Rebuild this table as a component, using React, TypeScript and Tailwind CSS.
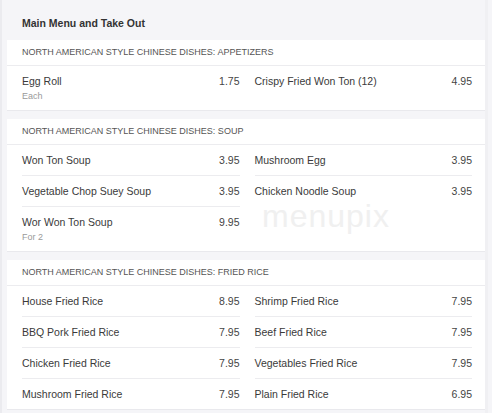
type Item = { name: string; price: string; note?: string };
type Section = { title: string; items: Item[] };

const sections: Section[] = [
  {
    title: "NORTH AMERICAN STYLE CHINESE DISHES: APPETIZERS",
    items: [
      { name: "Egg Roll", price: "1.75", note: "Each" },
      { name: "Crispy Fried Won Ton (12)", price: "4.95" },
    ],
  },
  {
    title: "NORTH AMERICAN STYLE CHINESE DISHES: SOUP",
    items: [
      { name: "Won Ton Soup", price: "3.95" },
      { name: "Mushroom Egg", price: "3.95" },
      { name: "Vegetable Chop Suey Soup", price: "3.95" },
      { name: "Chicken Noodle Soup", price: "3.95" },
      { name: "Wor Won Ton Soup", price: "9.95", note: "For 2" },
    ],
  },
  {
    title: "NORTH AMERICAN STYLE CHINESE DISHES: FRIED RICE",
    items: [
      { name: "House Fried Rice", price: "8.95" },
      { name: "Shrimp Fried Rice", price: "7.95" },
      { name: "BBQ Pork Fried Rice", price: "7.95" },
      { name: "Beef Fried Rice", price: "7.95" },
      { name: "Chicken Fried Rice", price: "7.95" },
      { name: "Vegetables Fried Rice", price: "7.95" },
      { name: "Mushroom Fried Rice", price: "7.95" },
      { name: "Plain Fried Rice", price: "6.95" },
    ],
  },
];

function MenuRow({ item }: { item: Item }) {
  return (
    <div className="border-b border-[#ececef] py-[7px] last:border-b-0">
      <div className="flex items-start justify-between text-[10.5px] leading-[16px] text-[#3a3a3a]">
        <span>{item.name}</span>
        <span className="text-[#444]">{item.price}</span>
      </div>
      {item.note && (
        <div className="text-[9px] leading-[14px] text-[#9a9a9a]">{item.note}</div>
      )}
    </div>
  );
}

function MenuCard({ section }: { section: Section }) {
  const left = section.items.filter((_, i) => i % 2 === 0);
  const right = section.items.filter((_, i) => i % 2 === 1);
  return (
    <div className="bg-white shadow-[0_1px_0_#e9e9ed]">
      <div className="flex h-[26px] items-center border-b border-[#ececef] px-[15px] text-[9px] text-[#555]">
        {section.title}
      </div>
      <div className="grid grid-cols-2 gap-x-[15px] pl-[15px] pr-[13px]">
        <div className="flex flex-col">
          {left.map((it) => (
            <MenuRow key={it.name} item={it} />
          ))}
        </div>
        <div className="flex flex-col">
          {right.map((it) => (
            <MenuRow key={it.name} item={it} />
          ))}
        </div>
      </div>
    </div>
  );
}

export default function App() {
  return (
    <div
      className="relative flex h-[413px] w-[492px] overflow-hidden bg-[#f5f5f8]"
      style={{ fontFamily: '"Liberation Sans", Arial, sans-serif' }}
    >
      <div className="w-[2px] shrink-0 bg-[#ebebef]" />
      <div className="flex w-[483px] flex-col pl-[5px]">
        <div className="pb-[10px] pl-[15px] pt-[16px] text-[10.5px] font-bold leading-[14px] text-[#333]">
          Main Menu and Take Out
        </div>
        <div className="flex flex-col gap-[9px]">
          {sections.map((s) => (
            <MenuCard key={s.title} section={s} />
          ))}
        </div>
      </div>
      <div className="w-[3px] shrink-0 bg-[#f0f0f3]" />

      {/* watermark */}
      <div className="pointer-events-none absolute left-[262px] top-[200px] text-[32px] font-light leading-none tracking-[1px] text-[#e2e2e2] opacity-50">
        menupix
      </div>
    </div>
  );
}
